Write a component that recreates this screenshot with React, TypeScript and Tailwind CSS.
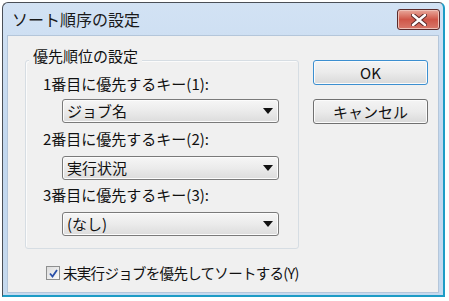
const font = { fontFamily: '"Noto Sans CJK JP", "Noto Sans", sans-serif' }

function Combo({ value }: { value: string }) {
  return (
    <div className="ml-[19px] flex h-[24px] w-[217px] items-center justify-between rounded-[3px] border border-[#7a7a7a] bg-gradient-to-b from-[#f6f6f6] via-[#ebebeb] to-[#dcdcdc] pl-[4px] pr-[5px] shadow-[inset_0_0_0_1px_#fcfcfc]">
      <span className="text-[15px] leading-[18px] text-[#111]">{value}</span>
      <svg width="10" height="6" viewBox="0 0 10 6">
        <path d="M0 0H10L5 6Z" fill="#111" />
      </svg>
    </div>
  )
}

function Button({ label, focused }: { label: string; focused?: boolean }) {
  return (
    <div
      className={`flex h-[25px] w-[115px] items-center justify-center rounded-[3px] border bg-gradient-to-b from-[#f4f4f4] via-[#ebebeb] to-[#d9d9d9] text-[15px] leading-[18px] text-[#111] shadow-[inset_0_0_0_1px_#fbfbfb] ${
        focused ? "border-[#3c8fd0] shadow-[inset_0_0_0_1px_#7ed0f4]" : "border-[#707070]"
      }`}
    >
      {label}
    </div>
  )
}

export default function App() {
  return (
    <div className="h-[301px] w-[449px] overflow-hidden bg-white" style={font}>
      <div className="ml-[2px] mt-[2px] flex h-[295px] w-[443px] flex-col rounded-t-[6px] border-l border-t border-b-2 border-r-2 border-l-[#4a4f57] border-t-[#4a4f57] border-r-[#1d9cc6] border-b-[#1d9cc6] bg-gradient-to-b from-[#d2e2f4] via-[#c2d7ee] to-[#c6daef]">
        {/* title bar */}
        <div className="flex h-[32px] items-start justify-between pl-[9px] pr-[3px]">
          <span className="mt-[6px] text-[16px] leading-[20px] text-[#1a1a1a]">ソート順序の設定</span>
          <div className="mt-[6px] flex h-[21px] w-[43px] items-center justify-center rounded-[3px] border border-[#5b2b2b] bg-gradient-to-b from-[#e8a89c] via-[#cf5648] to-[#d8786a] shadow-[inset_0_0_0_1px_#eec0b6]">
            <svg width="16" height="12" viewBox="0 0 16 12">
              <path d="M2 1L14 11M14 1L2 11" stroke="#5a2a2a" strokeWidth="4.5" strokeLinecap="round" />
              <path d="M2 1L14 11M14 1L2 11" stroke="#ffffff" strokeWidth="2.5" strokeLinecap="round" />
            </svg>
          </div>
        </div>

        {/* client area */}
        <div className="mx-[4px] mb-[2px] flex flex-1 border border-[#b4c6da] bg-[#f0f0f0]">
          <div className="flex w-[291px] shrink-0 flex-col">
            {/* group box */}
            <div className="relative ml-[17px] mt-[24px] flex h-[189px] w-[274px] flex-col rounded-[3px] border border-[#d6dde3] pl-[17px] pt-[14px] shadow-[inset_1px_1px_0_#fbfbfb]">
              <span className="absolute left-[3px] top-[-14px] bg-[#f0f0f0] px-[4px] text-[15px] leading-[18px] text-[#111]">
                優先順位の設定
              </span>
              <span className="text-[15px] leading-[18px] text-[#111]">1番目に優先するキー(1):</span>
              <div className="mt-[6px]">
                <Combo value="ジョブ名" />
              </div>
              <span className="mt-[7px] text-[15px] leading-[18px] text-[#111]">2番目に優先するキー(2):</span>
              <div className="mt-[8px]">
                <Combo value="実行状況" />
              </div>
              <span className="mt-[6px] text-[15px] leading-[18px] text-[#111]">3番目に優先するキー(3):</span>
              <div className="mt-[8px]">
                <Combo value="(なし)" />
              </div>
            </div>

            {/* checkbox */}
            <div className="ml-[38px] mt-[15px] flex items-center gap-[3px] whitespace-nowrap">
              <div className="flex h-[14px] w-[14px] shrink-0 items-center justify-center border border-[#8e8f8f] bg-gradient-to-br from-[#dcdcdc] to-[#fafafa]">
                <svg width="9" height="9" viewBox="0 0 9 9">
                  <path d="M1 4.5L3.5 7.5L8 1" stroke="#2a4fa8" strokeWidth="1.8" fill="none" />
                </svg>
              </div>
              <span className="text-[14.5px] leading-[18px] tracking-[-0.7px] text-[#111]">未実行ジョブを優先してソートする(Y)</span>
            </div>
          </div>

          {/* buttons */}
          <div className="ml-[14px] mt-[24px] flex flex-col gap-[14px]">
            <Button label="OK" focused />
            <Button label="キャンセル" />
          </div>
        </div>
      </div>
    </div>
  )
}
